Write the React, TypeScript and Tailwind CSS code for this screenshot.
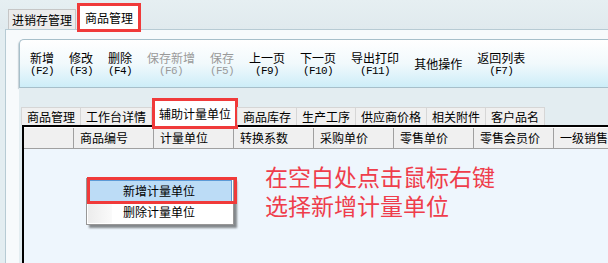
import React from "react";

const FONT = '"Noto Sans CJK SC", "Liberation Sans", sans-serif';
const MONO = '"Liberation Mono", "Noto Sans CJK SC", monospace';

type Btn = { label: string; key?: string; disabled?: boolean };

const buttons: Btn[] = [
  { label: "新增", key: "(F2)" },
  { label: "修改", key: "(F3)" },
  { label: "删除", key: "(F4)" },
  { label: "保存新增", key: "(F6)", disabled: true },
  { label: "保存", key: "(F5)", disabled: true },
  { label: "上一页", key: "(F9)" },
  { label: "下一页", key: "(F10)" },
  { label: "导出打印", key: "(F11)" },
  { label: "其他操作" },
  { label: "返回列表", key: "(F7)" },
];

const subTabs = ["商品管理", "工作台详情", "辅助计量单位", "商品库存", "生产工序", "供应商价格", "相关附件", "客户品名"];
const cols = ["商品编号", "计量单位", "转换系数", "采购单价", "零售单价", "零售会员价", "一级销售价"];

export default function App() {
  return (
    <div
      className="relative w-[608px] h-[263px] overflow-hidden bg-[#e3edf1] text-[12px] text-black flex flex-col"
      style={{ fontFamily: FONT }}
    >
      {/* top tabs */}
      <div className="relative z-10 h-[29px] shrink-0 flex items-end pl-[8px] bg-gradient-to-b from-[#e6eff2] to-[#e0eaee]">
        <div className="h-[20px] px-[3px] bg-[#ececec] border border-b-0 border-[#c6c6c6] flex items-center leading-none">
          进销存管理
        </div>
        <div className="h-[29px] -mb-[3px] ml-[1px] px-[5px] bg-white border-[3px] border-[#f03a3a] flex items-center text-[12px] leading-none">
          商品管理
        </div>
      </div>

      {/* content panel */}
      <div className="flex-1 ml-[5px] border-l border-t border-[#b7cbd4] bg-[#f7fafc] flex flex-col pl-[13px] pt-[9px] min-h-0">
        {/* toolbar */}
        <div className="h-[49px] shrink-0 rounded-tl-[5px] border border-r-0 border-[#a7bfca] bg-gradient-to-b from-[#ffffff] via-[#f1f9fc] to-[#cdedf8] flex items-center pl-[10px] gap-[15px] shadow-[-1px_1px_1px_rgba(150,170,180,0.5)]">
          {buttons.map((b) => (
            <div
              key={b.label}
              className={`flex flex-col items-center ${b.disabled ? "text-[#9a9a9a]" : "text-black"}`}
            >
              <span className="leading-[14px] whitespace-nowrap">{b.label}</span>
              {b.key && (
                <span
                  className="leading-[12px] text-[11px] tracking-[-0.6px] whitespace-nowrap"
                  style={{ fontFamily: MONO }}
                >
                  {b.key}
                </span>
              )}
            </div>
          ))}
        </div>

        {/* lower area */}
        <div className="flex-1 bg-[#e3edf1] flex flex-col pl-[2px] pt-[18px] min-h-0">
          {/* sub tabs */}
          <div className="relative z-10 h-[19px] shrink-0 flex items-end">
            {subTabs.map((t, i) =>
              t === "辅助计量单位" ? (
                <div
                  key={t}
                  className="h-[31px] -mb-[4px] px-[4px] bg-white border-[3px] border-[#f03a3a] flex items-center whitespace-nowrap leading-none"
                >
                  {t}
                </div>
              ) : (
                <div
                  key={t}
                  className={`h-[18px] px-[5px] bg-[#f0f0f0] border border-b-0 border-[#d6d6d6] flex items-center whitespace-nowrap leading-none ${i === 0 ? "" : "-ml-[1px]"}`}
                >
                  {t}
                </div>
              )
            )}
          </div>

          {/* grid */}
          <div className="flex-1 ml-[1px] border-l-2 border-t-2 border-black bg-[#eef6fd] flex flex-col min-h-0">
            <div className="h-[22px] shrink-0 flex bg-[#f0f0f0] border-t border-white border-b border-b-[#a0a0a0] overflow-hidden">
              <div className="w-[49px] shrink-0" />
              {cols.map((c) => (
                <div
                  key={c}
                  className="w-[80px] shrink-0 border-l border-[#a0a0a0] pl-[6px] flex items-center whitespace-nowrap leading-none"
                >
                  {c}
                </div>
              ))}
            </div>
            <div className="flex-1" />
          </div>
        </div>
      </div>

      {/* context menu */}
      <div className="absolute left-[86px] top-[178px] w-[148px] h-[47px] bg-white border border-[#979797] shadow-[3px_3px_2px_rgba(0,0,0,0.45)] flex flex-col p-[1px]">
        <div className="absolute left-[1px] top-[1px] bottom-[1px] w-[24px] bg-gradient-to-r from-[#ececec] to-[#fafafa]" />
        <div className="relative h-[22px] bg-[#bcdcf6] border border-[#5c9ad6] flex items-center pl-[34px] whitespace-nowrap leading-none">
          新增计量单位
        </div>
        <div className="relative h-[22px] flex items-center pl-[35px] whitespace-nowrap leading-none">
          删除计量单位
        </div>
      </div>
      {/* red highlight around first menu item */}
      <div className="absolute left-[87px] top-[177px] w-[150px] h-[27px] border-[3px] border-[#f03a3a]" />

      {/* annotation */}
      <div
        className="absolute left-[265px] top-[162px] text-[23px] leading-[29px] text-[#ef3d4b] whitespace-nowrap"
        style={{ fontFamily: FONT }}
      >
        <div>在空白处点击鼠标右键</div>
        <div>选择新增计量单位</div>
      </div>
    </div>
  );
}
